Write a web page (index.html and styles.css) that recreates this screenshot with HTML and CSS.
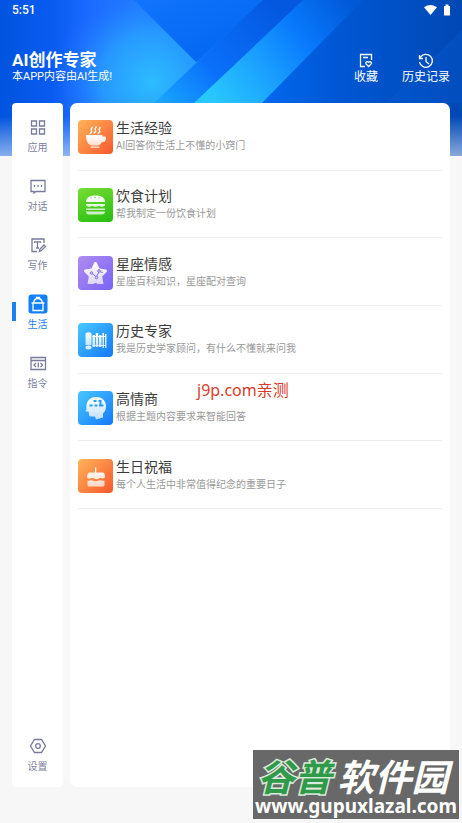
FILE: index.html
```html
<!DOCTYPE html>
<html lang="zh-CN">
<head>
<meta charset="utf-8">
<meta name="viewport" content="width=device-width, initial-scale=1">
<title>AI创作专家</title>
<link rel="stylesheet" href="styles.css">
</head>
<body>
<div class="app">
  <svg class="backdrop" viewBox="0 0 462 156" preserveAspectRatio="none" aria-hidden="true">
    <defs>
      <linearGradient id="base" x1="0" y1="0" x2="1" y2="0"><stop offset="0" stop-color="#0054de"/><stop offset=".12" stop-color="#0a5cf2"/><stop offset=".2" stop-color="#1c6cff"/><stop offset=".3" stop-color="#2484ff"/><stop offset=".5" stop-color="#0470fa"/><stop offset=".72" stop-color="#0058d6"/><stop offset="1" stop-color="#0048b4"/></linearGradient>
      <radialGradient id="glow" gradientUnits="userSpaceOnUse" cx="152" cy="82" r="100"><stop offset="0" stop-color="#2cbcff"/><stop offset=".5" stop-color="#289cff" stop-opacity=".9"/><stop offset=".85" stop-color="#1f72ff" stop-opacity=".5"/><stop offset="1" stop-color="#1668ff" stop-opacity="0"/></radialGradient>
      <linearGradient id="beam" gradientUnits="userSpaceOnUse" x1="215" y1="103" x2="350" y2="0"><stop offset="0" stop-color="#28c8ff"/><stop offset=".35" stop-color="#1aa0ff"/><stop offset=".65" stop-color="#0878fc"/><stop offset="1" stop-color="#0058d6"/></linearGradient>
      <linearGradient id="band" gradientUnits="userSpaceOnUse" x1="160" y1="100" x2="270" y2="0"><stop offset="0" stop-color="#18a4ff"/><stop offset=".4" stop-color="#0a70fa"/><stop offset="1" stop-color="#0458e0"/></linearGradient>
      <linearGradient id="wedge" x1="0" y1="0" x2="1" y2="1"><stop offset="0" stop-color="#1274fc"/><stop offset="1" stop-color="#0064f0"/></linearGradient>
      <linearGradient id="fade" x1="0" y1="0" x2="0" y2="1"><stop offset="0" stop-color="#f7f7f7" stop-opacity="0"/><stop offset="1" stop-color="#f7f7f7" stop-opacity=".55"/></linearGradient>
    </defs>
    <path fill="url(#base)" d="M0 0h462v156H0z"/>
    <path fill="url(#glow)" d="M40 0h95l90 90v66H40z"/>
    <path fill="url(#wedge)" d="M134 0h129l-67 62z"/>
    <path fill="url(#band)" d="M263 0h40L194 103h-40z"/>
    <path fill="url(#beam)" d="M303 0h60L262 103h-68z"/>
    <path fill="#0860da" opacity=".25" d="M462 30v73h-76z"/>
    <path fill="url(#fade)" d="M0 116h462v40H0z"/>
  </svg>

  <div class="status">
    <span>5:51</span>
    <svg class="status-icons" viewBox="0 0 26 12" aria-hidden="true"><path fill="#fff" d="M0 3.2Q6.500-1 13 3.200L6.500 11zM20 2h1.500V.5h3V2H26v9.500h-6z"/></svg>
  </div>

  <header class="header">
    <div>
      <h1 class="title">AI创作专家</h1>
      <p class="subtitle">本APP内容由AI生成!</p>
    </div>
    <div class="actions">
      <button class="action" type="button">
        <svg viewBox="0 0 16 16"><path d="M7 13.500H2.500v-12h11V7M5 4.500h5M10.600 13.500 8 10.900c-.9-1.700 1.200-3.200 2.600-1.600 1.400-1.600 3.500-.1 2.600 1.600z"/></svg>
        收藏
      </button>
      <button class="action" type="button">
        <svg viewBox="0 0 16 16"><path d="M2.300 4.500A6.500 6.500 0 1 1 1.500 9M1.500 2v3.500H5M8 4v4.500l3 2.500"/></svg>
        历史记录
      </button>
    </div>
  </header>

  <div class="panels">
    <nav class="side">
      <a class="tab" href="#apps"><svg viewBox="0 0 20 20"><path d="M3.500 4h5v5h-5zM11.500 4h5v5h-5zM3.500 12h5v5h-5zM11.500 12h5v5h-5z"/></svg>应用</a>
      <a class="tab" href="#chat"><svg viewBox="0 0 20 20"><path d="M3 4.500h14v11H8L6 17v-1.500H3zM6.500 9v2M10 9v2M13.500 9v2"/></svg>对话</a>
      <a class="tab" href="#write"><svg viewBox="0 0 20 20"><path d="M16 8V4H4v12.500h5M6.500 8V6.800h6V8M9.500 7v6M8 13h3M11.500 16.500l.5-2.500 4-4 1.500 1.500-4 4z"/></svg>写作</a>
      <a class="tab active" href="#life" aria-current="page"><svg viewBox="0 0 20 20"><rect class="tile" x=".5" y=".5" width="19" height="19" rx="3"/><path d="M3.500 9h13M5 9v7.500h10V9M5.500 9C6 6 7.500 4.500 10 4.500S14 6 14.500 9M8.500 4.500v-1h3v1"/></svg>生活</a>
      <a class="tab" href="#prompts"><svg viewBox="0 0 20 20"><path d="M3 4.500h14.500v12H3zM3 7.500h14.500M8 10l-2 2 2 2M12.500 10l2 2-2 2M10.300 9.500v5"/></svg>指令</a>
      <a class="tab settings" href="#settings"><svg viewBox="0 0 20 20"><path d="M6.500 3.500h7l4 6.500-4 6.500h-7L2.500 10z"/><circle cx="10" cy="10" r="2.300"/></svg>设置</a>
    </nav>

    <main class="content">
      <ul class="list">
        <li><a class="row" href="#tips">
          <svg class="icon orange" viewBox="0 0 34 34"><path class="stroke" d="M14 7q-2 2-1 3.500T11 14M18 6.500q-2 2-1 3.500T15 13.500M22 7q-2 2-1 3.500T19 14"/><path d="M7.500 15H24v1.500h2.500q2 1 0 5L23 22.500c-1 2-2 3-4 3h-6c-4-1-5.500-5-5.500-10.500zM12 26.500h9V28h-9z"/></svg>
          <span class="name">生活经验</span><span class="desc">AI回答你生活上不懂的小窍门</span></a></li>
        <li><a class="row" href="#diet">
          <svg class="icon green" viewBox="0 0 34 34"><path d="M7.500 14c0-4 3-6.500 9.500-6.500s9.500 2.500 9.500 6.500zM7.500 16h19v1.500l-3 1.500-3-1-3.500 1-3.500-1-3 1-3-1.500zM7.500 20.500h19V22h-19zM7.500 23.500h19c0 2-1 3-3 3h-13c-2 0-3-1-3-3z"/><path class="cut" d="M12 10h1M16 9.500h1M20 10h1"/></svg>
          <span class="name">饮食计划</span><span class="desc">帮我制定一份饮食计划</span></a></li>
        <li><a class="row" href="#stars">
          <svg class="icon purple" viewBox="0 0 34 34"><path d="M15.500 7q1.500-2 3 0l2.500 5.500 6 1q2.500.5 1 2.500l-4.300 4.500L25 28h-6q-2-2-4 0H9l1.300-7.500L6 16q-1.500-2 1-2.500l6-1z"/><path class="cut" d="m13 17 5 4 2.500-5.500 4 1"/><g class="node"><circle cx="13" cy="17" r="1.300"/><circle cx="18" cy="21.500" r="1.300"/><circle cx="20.500" cy="15" r="1.300"/></g></svg>
          <span class="name">星座情感</span><span class="desc">星座百科知识，星座配对查询</span></a></li>
        <li><a class="row" href="#history">
          <svg class="icon blue" viewBox="0 0 34 34"><path d="M7 10.500q3-2.500 6 0V22H7z"/><ellipse cx="10" cy="24.500" rx="3" ry="2"/><path d="M14 12h2.500v12H14zM17.300 10h2.400v14h-2.400zM20.500 12H23v12h-2.500zM24 10h1.500v15H24zM26.500 11H28v14h-1.500z"/><path d="M14 13h13v1H14zM14 22h13v1H14z"/></svg>
          <span class="name">历史专家</span><span class="desc">我是历史学家顾问，有什么不懂就来问我</span></a></li>
        <li><a class="row" href="#eq">
          <svg class="icon blue" viewBox="0 0 34 34"><path d="M8 18C7 10 11.500 6 17.500 6 24 6 27.500 10 27.500 15c0 4-1 5.500-3 7.500v4l-7 2-1-3h-4c-2 0-2-1-2-3L10 20.500H7z"/><path class="cut wide" d="M11 14.500h3M16 14.500h3M20.500 14.500h4.500M15 10h3M20 10h2v4"/></svg>
          <span class="name">高情商</span><span class="desc">根据主题内容要求来智能回答</span></a></li>
        <li><a class="row" href="#birthday">
          <svg class="icon orange" viewBox="0 0 34 34"><path d="M16.500 8.500h1.300v5H24c2 0 2.500 2 2.500 5l-2 1c-2 0-2-1-4 0s-3 1-5 0-3 0-4.500 0-2.500-.5-2.500-1.500c0-3 1-4.500 3-4.500h5zM9 21.500c2 1 3-1 5 0s4 1 6 0 4 1 6 0V26q0 1.500-1.500 1.500h-14Q9 27.500 9 26z"/></svg>
          <span class="name">生日祝福</span><span class="desc">每个人生活中非常值得纪念的重要日子</span></a></li>
      </ul>
    </main>
  </div>

  <p class="note">j9p.com亲测</p>
  <aside class="brand">
    <div class="brand-name"><span class="brand-green">谷普</span><span>软件园</span></div>
    <div class="brand-url">www.gupuxlazal.com</div>
  </aside>

  <svg class="defs" aria-hidden="true"><defs>
    <linearGradient id="shade" x1="0" y1="0" x2="0" y2="1"><stop offset="0" stop-color="#fff"/><stop offset="1" stop-color="#fff" stop-opacity=".7"/></linearGradient>
  </defs></svg>
</div>
</body>
</html>
```
FILE: styles.css
```css
* { box-sizing: border-box; }

body {
  margin: 0;
  background: #f7f7f7;
  font-family: Roboto, "Noto Sans CJK SC", sans-serif;
}

h1, p, ul { margin: 0; padding: 0; }
ul { list-style: none; }
a { color: inherit; text-decoration: none; }

.app {
  position: relative;
  display: flex;
  flex-direction: column;
  min-height: 100vh;
  padding: 0 12px 36px;
}

.backdrop {
  position: absolute;
  top: 0;
  left: 0;
  width: 100%;
  height: 156px;
}

.status {
  position: relative;
  display: flex;
  justify-content: space-between;
  align-items: center;
  height: 20px;
  color: #fff;
  font-size: 12px;
  font-weight: 500;
}

.status-icons { width: 26px; height: 12px; }

.header {
  position: relative;
  display: flex;
  justify-content: space-between;
  height: 83px;
  padding-top: 30px;
  color: #fff;
}

.title {
  font-size: 17px;
  line-height: 20px;
  font-weight: 700;
}

.subtitle { font-size: 11px; line-height: 14px; }

.actions {
  display: flex;
  align-items: flex-start;
  gap: 24px;
}

.action {
  display: flex;
  flex-direction: column;
  align-items: center;
  padding: 3px 0 0;
  border: 0;
  background: none;
  color: #fff;
  font: 12px/17px Roboto, "Noto Sans CJK SC", sans-serif;
}

.action svg {
  width: 16px;
  height: 16px;
  fill: none;
  stroke: #fff;
  stroke-width: 1.3;
}

.panels {
  position: relative;
  display: flex;
  flex: 1;
  gap: 7px;
}

.side {
  display: flex;
  flex-direction: column;
  gap: 20px;
  width: 51px;
  padding: 14px 0 12px;
  border-radius: 4px;
  background: #fff;
}

.tab {
  display: flex;
  flex-direction: column;
  align-items: center;
  gap: 2px;
  color: #7c7fa3;
  font-size: 10px;
  line-height: 17px;
}

.tab svg {
  width: 20px;
  height: 20px;
  fill: none;
  stroke: #777a9c;
  stroke-width: 1.3;
}

.tab.active {
  position: relative;
  color: #1c80f5;
}

.tab.active::before {
  content: "";
  position: absolute;
  top: 8px;
  left: 0;
  width: 4px;
  height: 19px;
  background: #1c80f5;
}

.tab.active svg { stroke: #fff; }
.tab .tile { fill: #1280fa; stroke: none; }
.settings { margin-top: auto; }

.content {
  flex: 1;
  padding: 0 8px;
  border-radius: 7px;
  background: #fff;
}

.list {
  display: grid;
  grid-template-rows: repeat(6, 1fr);
  height: 406px;
}

.list li {
  padding-top: 2px;
  border-bottom: 1px solid #eee;
}

.row {
  display: grid;
  grid-template-columns: 35px 1fr;
  grid-template-rows: 17px 17px;
  align-content: center;
  column-gap: 3px;
  height: 100%;
}

.icon {
  grid-row: 1 / 3;
  width: 35px;
  height: 34px;
  border-radius: 4px;
  fill: url(#shade);
}

.icon .stroke { fill: none; stroke: #fff; stroke-width: 1.3; }
.icon .cut { fill: none; stroke: #48c820; stroke-width: 1; }
.icon .wide { stroke: #28a0fa; stroke-width: 2; }
.icon .node { fill: #d9ccff; stroke: #8a6ee8; }
.icon.purple .cut { stroke: #8a6ee8; }
.orange { background: linear-gradient(135deg, #ffb45a, #f8582c); }
.green { background: linear-gradient(160deg, #78dc35, #25be10); }
.purple { background: linear-gradient(135deg, #b08cf0, #7864f6); }
.blue { background: linear-gradient(135deg, #48c8ff, #1478fa); }

.name { color: #3c3c3c; font-size: 14px; line-height: 17px; }
.desc { color: #999; font-size: 10px; line-height: 17px; }

.note {
  position: absolute;
  top: 379px;
  left: 197px;
  color: #d93b2b;
  font: 16px/22px "Noto Sans", "Noto Sans CJK SC", sans-serif;
}

.brand {
  position: absolute;
  right: 3px;
  bottom: 4px;
  width: 206px;
  height: 69px;
  background: #686868;
  color: #fff;
  white-space: nowrap;
}

.brand-name {
  display: flex;
  justify-content: center;
  gap: 6px;
  padding: 6px 6px 2px 0;
  font: italic 700 37px/38px "Noto Sans CJK SC", sans-serif;
}

.brand-green {
  color: #2f9a49;
  paint-order: stroke fill;
  -webkit-text-stroke: 3px #dcebdc;
}

.brand-url {
  text-align: center;
  font: 700 19px/20px "Noto Sans", "Open Sans", sans-serif;
}

.defs { position: absolute; width: 0; height: 0; }
```
